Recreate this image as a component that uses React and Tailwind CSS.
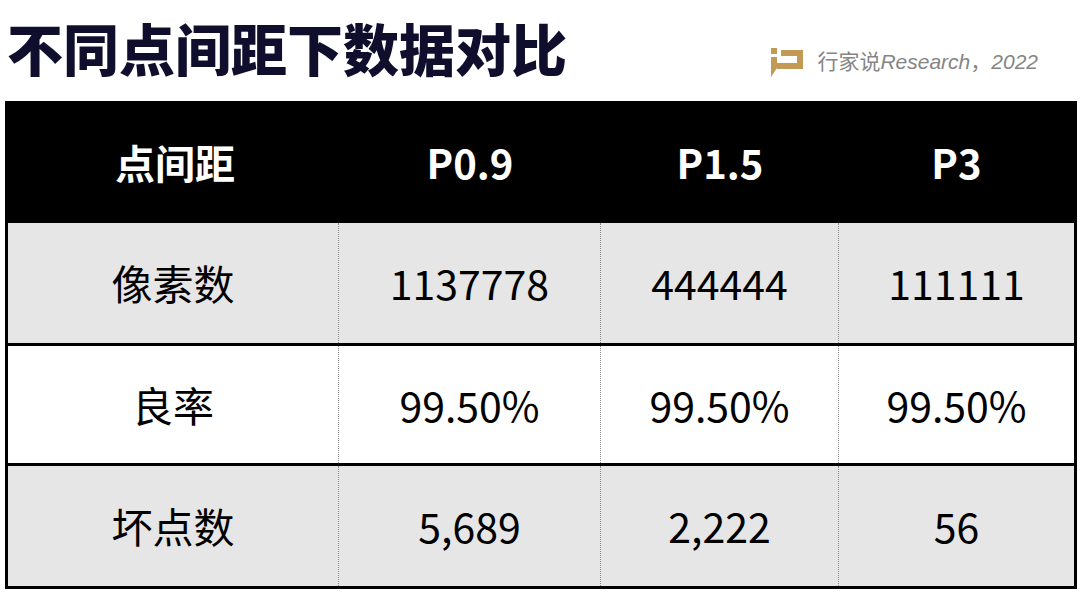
import React from "react";

const rows = [
  { name: "像素数", vals: ["1137778", "444444", "111111"], bg: "bg-[#e6e6e6]" },
  { name: "良率", vals: ["99.50%", "99.50%", "99.50%"], bg: "bg-white" },
  { name: "坏点数", vals: ["5,689", "2,222", "56"], bg: "bg-[#e6e6e6]" },
];

function Logo() {
  return (
    <svg width="36" height="31" viewBox="0 0 36 31" className="mr-[12px] mt-[4px]">
      <rect x="2" y="1" width="6" height="6" fill="#c39a55" />
      <path d="M2 10 H8 V21 L2 30 Z" fill="#c39a55" />
      <path d="M12 3 H34 V22 H8 V16 H28 V9 H12 Z" fill="#c39a55" />
    </svg>
  );
}

export default function App() {
  return (
    <div
      className="w-[1080px] h-[592px] bg-white overflow-hidden"
      style={{ fontFamily: '"Noto Sans CJK SC", "Noto Sans", sans-serif' }}
    >
      <div className="h-[101px] flex items-start justify-between">
        <h1 className="ml-[7px] mt-[14px] text-[56px] leading-[66px] font-black text-[#0f0f2d]">
          不同点间距下数据对比
        </h1>
        <div className="flex items-center mt-[43px] mr-[42px]">
          <Logo />
          <span className="text-[21px] leading-[28px] text-[#858585]">
            行家说
            <span className="italic" style={{ fontFamily: '"Liberation Sans", Arial, sans-serif' }}>
              Research
            </span>
            ，
            <span className="italic" style={{ fontFamily: '"Liberation Sans", Arial, sans-serif' }}>
              2022
            </span>
          </span>
        </div>
      </div>
      <div className="ml-[5px] w-[1072px] border-x-[3px] border-b-[3px] border-black">
        <div className="grid grid-cols-[331px_262px_238px_235px] h-[122px] bg-black text-white text-[40px] font-bold">
          <div className="flex items-center justify-center pl-[3px]">点间距</div>
          <div className="flex items-center justify-center">P0.9</div>
          <div className="flex items-center justify-center">P1.5</div>
          <div className="flex items-center justify-center">P3</div>
        </div>
        {rows.map((r, i) => (
          <div
            key={r.name}
            className={`grid grid-cols-[331px_262px_238px_235px] ${i === 2 ? "h-[123px]" : "h-[120px]"} ${r.bg} text-[41px] text-black ${
              i > 0 ? "border-t-[3px] border-black" : ""
            }`}
          >
            <div className="flex items-center justify-center border-r border-dotted border-[#8a8a8a]">
              {r.name}
            </div>
            {r.vals.map((v, j) => (
              <div
                key={j}
                className={`flex items-center justify-center ${
                  j < 2 ? "border-r border-dotted border-[#8a8a8a]" : ""
                }`}
              >
                {v}
              </div>
            ))}
          </div>
        ))}
      </div>
    </div>
  );
}
